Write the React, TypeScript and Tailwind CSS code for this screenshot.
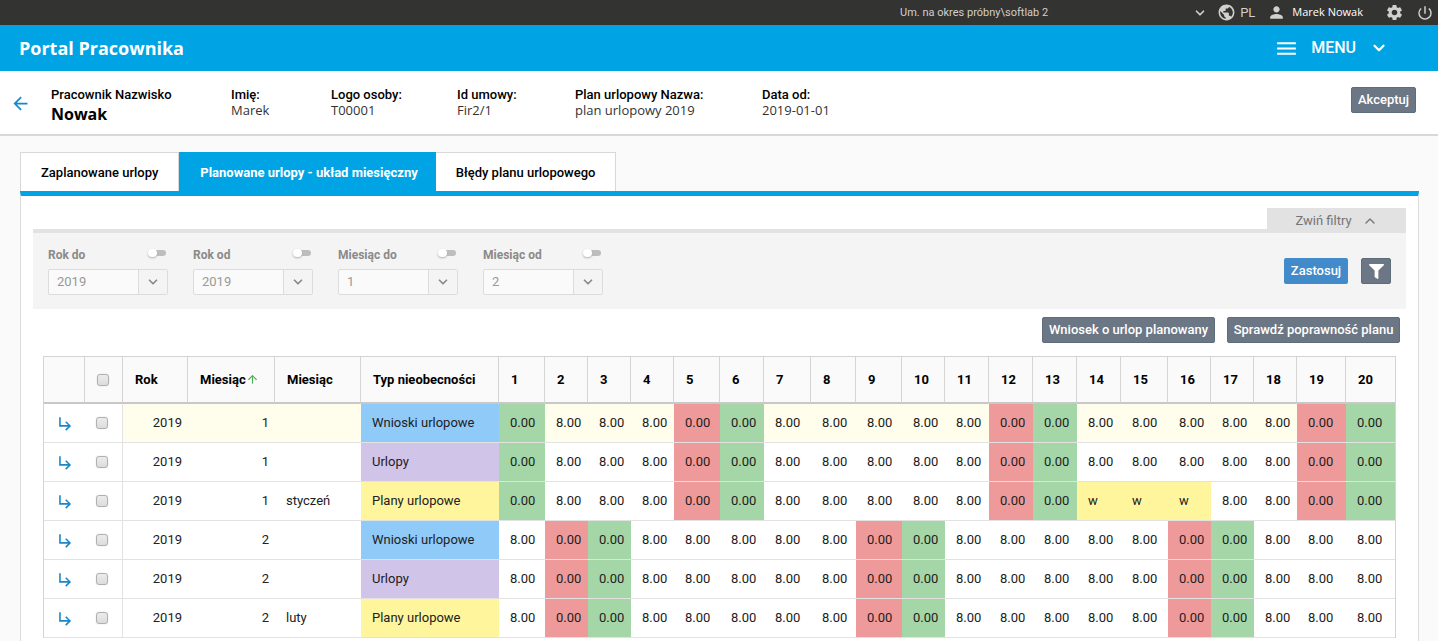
import { useState } from "react";
import { ChevronDown, ChevronUp, ArrowUp } from "lucide-react";
import {
  MdArrowBack,
  MdPublic,
  MdPerson,
  MdSettings,
  MdPowerSettingsNew,
  MdMenu,
  MdSubdirectoryArrowRight,
} from "react-icons/md";
import { FaFilter } from "react-icons/fa";

const DAY_WIDTHS = [46, 43, 43, 43, 46, 44, 47, 45, 46, 43, 44, 44, 44, 44, 47, 43, 43, 43, 49, 49];
const LEAD_WIDTHS = [41, 38, 65, 87, 86, 138];

type Row = { month: number; name: string; kind: "request" | "leave" | "plan" };

const ROWS: Row[] = [
  { month: 1, name: "", kind: "request" },
  { month: 1, name: "", kind: "leave" },
  { month: 1, name: "styczeń", kind: "plan" },
  { month: 2, name: "", kind: "request" },
  { month: 2, name: "", kind: "leave" },
  { month: 2, name: "luty", kind: "plan" },
];

const KINDS = {
  request: { label: "Wnioski urlopowe", color: "bg-[#90caf9]" },
  leave: { label: "Urlopy", color: "bg-[#d1c4e9]" },
  plan: { label: "Plany urlopowe", color: "bg-[#fff59d]" },
};

const SATURDAYS: Record<number, number[]> = { 1: [5, 12, 19], 2: [2, 9, 16] };
const SUNDAYS: Record<number, number[]> = { 1: [1, 6, 13, 20], 2: [3, 10, 17] };

function DayCell({ row, day }: { row: Row; day: number }) {
  if (row.month === 1 && row.kind === "plan" && day >= 14 && day <= 16) {
    return <td className="bg-[#fff59d] pl-[11px] text-left">w</td>;
  }
  if (SATURDAYS[row.month].includes(day)) return <td className="bg-[#ef9a9a] pl-[11px] text-left">0.00</td>;
  if (SUNDAYS[row.month].includes(day)) return <td className="bg-[#a5d6a7] pl-[11px] text-left">0.00</td>;
  return <td className="pl-[11px] text-left">8.00</td>;
}

function Tick({ label }: { label: string }) {
  return (
    <input
      type="checkbox"
      aria-label={label}
      className="block size-3 appearance-none rounded-[3px] border border-[#b0b0b0] bg-linear-to-b from-[#ececec] to-[#dcdcdc] shadow-[0_0_1px_#bbb] checked:from-[#418bca] checked:to-[#418bca]"
    />
  );
}

function Filter({ id, label, value }: { id: string; label: string; value: string }) {
  return (
    <div className="w-[120px]">
      <div className="flex h-5 items-start justify-between">
        <label htmlFor={id} className="text-xs leading-5 font-bold text-[#8a8a8a]">
          {label}
        </label>
        <span className="relative mt-1 mr-0.5 flex h-2 w-[18px] items-center">
          <input
            type="checkbox"
            role="switch"
            aria-label={`${label} – aktywny`}
            className="peer ml-1 h-1.5 w-full appearance-none rounded-full bg-[#bdbdbd]"
          />
          <span className="pointer-events-none absolute inset-y-0 left-0 w-[9px] rounded-full bg-white shadow-[0_1px_2px_#b0b0b0] peer-checked:left-2" />
        </span>
      </div>
      <div className="relative mt-1 h-[26px]">
        <select
          id={id}
          defaultValue={value}
          className="h-full w-full appearance-none rounded-[2px] border border-[#dcdcdc] bg-[#fafafa] pl-2 text-[13px] text-[#999]"
        >
          <option>{value}</option>
        </select>
        <span className="pointer-events-none absolute inset-y-px right-px flex w-[29px] items-center justify-center border-l border-[#dcdcdc] bg-[#f4f4f4] text-[#8a8a8a]">
          <ChevronDown size={14} strokeWidth={3} />
        </span>
      </div>
    </div>
  );
}

function Fact({ label, value, className }: { label: string; value: string; className: string }) {
  return (
    <div className={className}>
      <dt className="text-[13px] leading-4 font-medium text-black">{label}</dt>
      <dd className="font-['Open_Sans',sans-serif] text-[13px] leading-[14px] text-[#333]">{value}</dd>
    </div>
  );
}

const grayButton = "h-[26px] rounded-[2px] border border-[#5f6c7a] bg-[#6c7785] text-[13px] font-medium text-white";

export default function App() {
  const [tab, setTab] = useState(1);
  const tabs = ["Zaplanowane urlopy", "Planowane urlopy - układ miesięczny", "Błędy planu urlopowego"];
  return (
    <div className="flex min-h-screen flex-col bg-[#fafafa] font-[Roboto,sans-serif] text-[13px] text-[#212121]">
      <div className="flex h-[25px] items-center justify-end bg-[#333331] pr-1 text-[#d0d0d0]">
        <button className="flex items-center gap-[145px] pt-px text-[11px]">
          Um. na okres próbny\softlab 2
          <ChevronDown size={14} strokeWidth={3} />
        </button>
        <button className="ml-2.5 flex items-center gap-1 text-[13px]">
          <MdPublic size={19} />
          PL
        </button>
        <button className="ml-3 flex items-center gap-1.5 font-['Open_Sans',sans-serif] text-[11px] text-white">
          <MdPerson size={19} className="text-[#d0d0d0]" />
          Marek Nowak
        </button>
        <button aria-label="Ustawienia" className="ml-[22px]">
          <MdSettings size={19} />
        </button>
        <button aria-label="Wyloguj" className="ml-3">
          <MdPowerSettingsNew size={18} />
        </button>
      </div>

      <header className="flex h-[46px] items-center justify-between bg-[#00a4e4] pr-[50px] pl-[19px] text-white">
        <h1 className="font-['Open_Sans',sans-serif] text-lg font-bold">Portal Pracownika</h1>
        <button className="flex items-center text-base font-medium">
          <MdMenu size={25} />
          <span className="mr-3.5 ml-3">MENU</span>
          <ChevronDown size={18} strokeWidth={3} />
        </button>
      </header>

      <section className="flex h-[65px] items-start border-b-2 border-[#d8d8d8] bg-white pt-4 pr-[22px] pl-2.5">
        <a href="#back" aria-label="Wstecz" className="mt-1.5 mr-5 text-[#1b87c9]">
          <MdArrowBack size={21} />
        </a>
        <dl className="flex grow">
          <div className="w-[180px]">
            <dt className="text-[13px] leading-4 font-medium text-black">Pracownik Nazwisko</dt>
            <dd className="font-['Open_Sans',sans-serif] text-base leading-[22px] font-bold text-black">Nowak</dd>
          </div>
          <Fact label="Imię:" value="Marek" className="w-[100px]" />
          <Fact label="Logo osoby:" value="T00001" className="w-[126px]" />
          <Fact label="Id umowy:" value="Fir2/1" className="w-[118px]" />
          <Fact label="Plan urlopowy Nazwa:" value="plan urlopowy 2019" className="w-[187px]" />
          <Fact label="Data od:" value="2019-01-01" className="w-[100px]" />
        </dl>
        <button className={`${grayButton} w-[65px]`}>Akceptuj</button>
      </section>

      <main className="flex grow flex-col pt-4 pr-[19px] pl-5">
        <nav role="tablist" className="flex h-10 border-b border-[#00a4e4]">
          {tabs.map((t, i) => (
            <button
              key={t}
              role="tab"
              aria-selected={tab === i}
              onClick={() => setTab(i)}
              className={
                tab === i
                  ? "bg-[#00a4e4] pt-0.5 pr-[18px] pl-[21px] font-bold text-white"
                  : "border-t border-r border-[#d8d8d8] bg-white px-5 pt-0.5 font-medium text-black first:border-l"
              }
            >
              {t}
            </button>
          ))}
        </nav>
        <div className="grow border-x border-t-4 border-x-[#dcdcdc] border-t-[#00a4e4] bg-white px-3">
          <div className="mt-3 flex justify-end">
            <button className="flex h-[21px] w-[139px] items-center justify-center gap-2.5 bg-[#e2e2e2] pt-1 text-[13px] text-[#757575]">
              Zwiń filtry
              <ChevronUp size={16} strokeWidth={2} />
            </button>
          </div>
          <section className="flex h-20 items-start justify-between border-t-4 border-[#e2e2e2] bg-[#f4f4f4] px-[15px]">
            <div className="flex gap-[25px] pt-3">
              <Filter id="year-to" label="Rok do" value="2019" />
              <Filter id="year-from" label="Rok od" value="2019" />
              <Filter id="month-to" label="Miesiąc do" value="1" />
              <Filter id="month-from" label="Miesiąc od" value="2" />
            </div>
            <div className="flex gap-[13px] pt-[25px]">
              <button className="h-[26px] w-16 rounded-[2px] bg-[#418bca] text-[13px] font-medium text-white">Zastosuj</button>
              <button aria-label="Filtr" className={`${grayButton} flex w-[30px] items-center justify-center`}>
                <FaFilter size={15} />
              </button>
            </div>
          </section>
          <div className="mt-2 mr-1.5 flex justify-end gap-3">
            <button className={`${grayButton} w-[173px]`}>Wniosek o urlop planowany</button>
            <button className={`${grayButton} w-[173px]`}>Sprawdź poprawność planu</button>
          </div>
          <div className="mx-2.5 mt-[13px] border-x border-t border-[#d4d4d4]">
            <table className="w-full table-fixed border-separate border-spacing-0">
              <colgroup>
                {[...LEAD_WIDTHS, ...DAY_WIDTHS].map((w, i) => (
                  <col key={i} style={{ width: w }} />
                ))}
              </colgroup>
              <thead>
                <tr className="h-[47px] bg-[#fafafa] text-black [&>th]:border-r [&>th]:border-b-2 [&>th]:border-r-[#d4d4d4] [&>th]:border-b-[#c8c8c8] [&>th]:p-0 [&>th]:pl-3 [&>th]:text-left [&>th]:font-bold [&>th:last-child]:border-r-0">
                  <th aria-label="Szczegóły"></th>
                  <th>
                    <Tick label="Zaznacz wszystkie" />
                  </th>
                  <th>Rok</th>
                  <th>
                    <span className="flex items-center">
                      Miesiąc
                      <ArrowUp size={13} strokeWidth={2} className="text-[#4caf50]" />
                    </span>
                  </th>
                  <th>Miesiąc</th>
                  <th>Typ nieobecności</th>
                  {DAY_WIDTHS.map((_, i) => (
                    <th key={i}>{i + 1}</th>
                  ))}
                </tr>
              </thead>
              <tbody>
                {ROWS.map((row, i) => (
                  <tr
                    key={i}
                    className={
                      i === 0
                        ? "h-[39px] bg-[#fffdeb] [&>td]:border-b [&>td]:border-[#e2e2e2] [&>td]:py-0"
                        : "h-[39px] bg-white [&>td]:border-b [&>td]:border-[#e2e2e2] [&>td]:py-0"
                    }
                  >
                    <td className="bg-white pl-3">
                      <a href={`#row-${i}`} aria-label="Pokaż szczegóły" className="block text-[#1b87c9]">
                        <MdSubdirectoryArrowRight size={19} />
                      </a>
                    </td>
                    <td className="border-r border-r-[#c8c8c8] bg-white pl-[11px]">
                      <Tick label={`Zaznacz wiersz ${i + 1}`} />
                    </td>
                    <td className="pr-1.5 text-right">2019</td>
                    <td className="pr-1.5 text-right">{row.month}</td>
                    <td className="pl-[11px]">{row.name}</td>
                    <td className={`${KINDS[row.kind].color} pl-[11px]`}>{KINDS[row.kind].label}</td>
                    {DAY_WIDTHS.map((_, d) => (
                      <DayCell key={d} row={row} day={d + 1} />
                    ))}
                  </tr>
                ))}
              </tbody>
            </table>
          </div>
        </div>
      </main>
    </div>
  );
}
